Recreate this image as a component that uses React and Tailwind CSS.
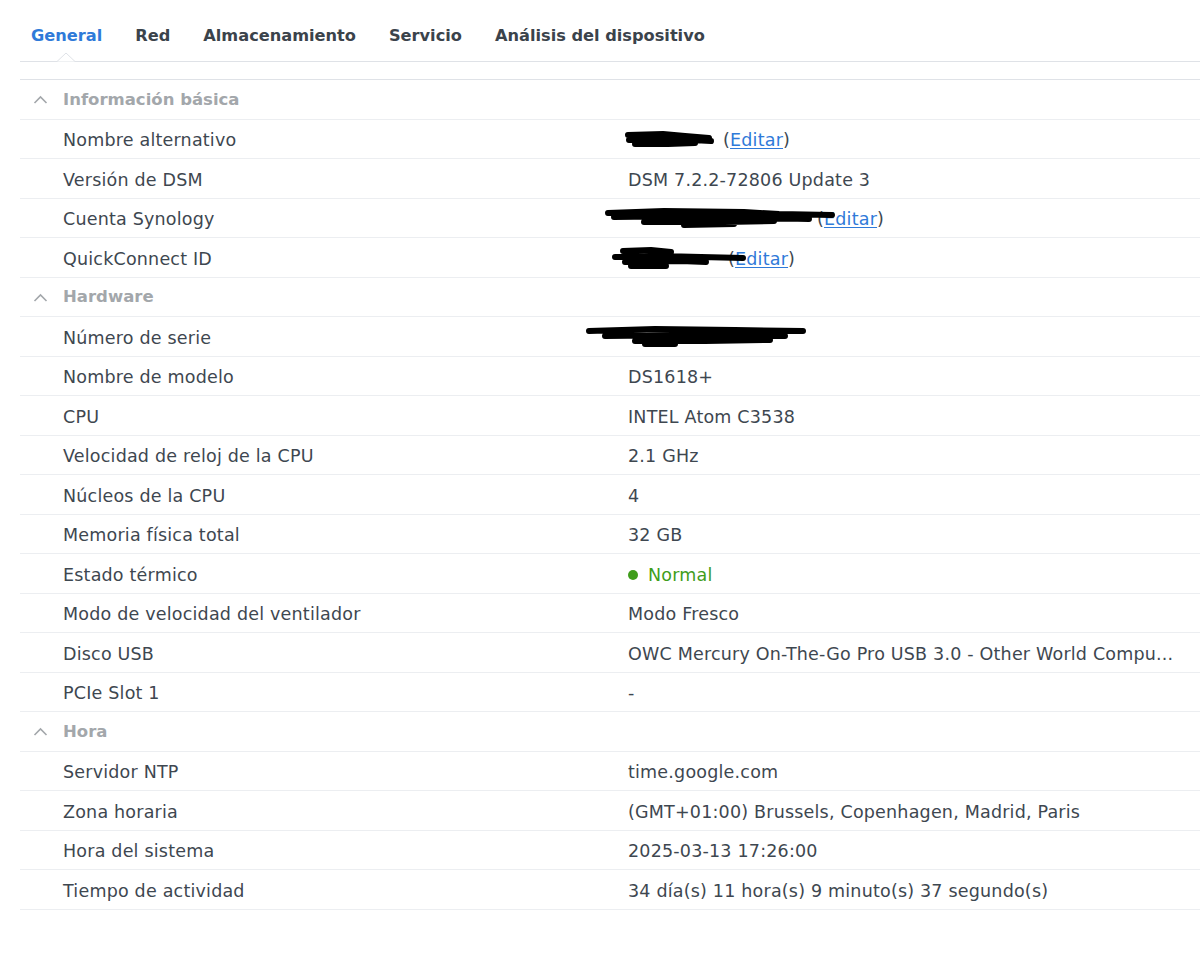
import React from "react";

const font = { fontFamily: '"DejaVu Sans", Verdana, sans-serif' };

function Chevron() {
  return (
    <svg width="15" height="10" viewBox="0 0 15 10" className="mr-[15px]">
      <path d="M1.5 8 L7.5 2 L13.5 8" fill="none" stroke="#a3a7ab" strokeWidth="1.6" />
    </svg>
  );
}

// black marker blobs over hidden values
function Scribble({ left, top, width, height, d }) {
  return (
    <svg
      className="absolute pointer-events-none"
      style={{ left, top }}
      width={width}
      height={height}
      viewBox={`0 0 ${width} ${height}`}
    >
      <path d={d} fill="none" stroke="#000" strokeWidth="6" strokeLinecap="round" strokeLinejoin="round" />
    </svg>
  );
}

function Editar() {
  return (
    <span>
      (<span className="text-[#2f7ad9] underline underline-offset-2">Editar</span>)
    </span>
  );
}

const sections = [
  {
    title: "Información básica",
    rows: [
      {
        label: "Nombre alternativo",
        value: (
          <span className="relative flex items-center">
            <span className="block w-[95px] h-[20px]" />
            <Editar />
            <Scribble left={-5} top={3} width={96} height={20} d="M5 5 L40 4 L62 6 L86 8 M6 10 L50 9 L88 11 M12 14 L45 14 L72 13" />
          </span>
        ),
      },
      { label: "Versión de DSM", value: "DSM 7.2.2-72806 Update 3" },
      {
        label: "Cuenta Synology",
        value: (
          <span className="relative flex items-center">
            <span className="block w-[189px] h-[20px]" />
            <Editar />
            <Scribble left={-24} top={2} width={232} height={22} d="M4 5 L60 3 L140 4 L175 6 L228 7 M10 9 L90 8 L160 10 L205 11 M40 14 L120 14 L170 13 M80 17 L130 16" />
          </span>
        ),
      },
      {
        label: "QuickConnect ID",
        value: (
          <span className="relative flex items-center">
            <span className="block w-[100px] h-[20px]" />
            <Editar />
            <Scribble left={-17} top={0} width={136} height={26} d="M12 5 L40 4 L60 6 M4 11 L50 10 L90 11 L132 12 M14 16 L70 15 L95 16 M20 20 L55 20" />
          </span>
        ),
      },
    ],
  },
  {
    title: "Hardware",
    rows: [
      {
        label: "Número de serie",
        value: (
          <span className="relative flex items-center">
            <span className="block w-[160px] h-[20px]" />
            <Scribble left={-43} top={-2} width={222} height={26} d="M4 5 L70 3 L150 4 L218 5 M20 10 L110 9 L200 10 M50 15 L120 15 L185 14 M60 18 L90 18" />
          </span>
        ),
      },
      { label: "Nombre de modelo", value: "DS1618+" },
      { label: "CPU", value: "INTEL Atom C3538" },
      { label: "Velocidad de reloj de la CPU", value: "2.1 GHz" },
      { label: "Núcleos de la CPU", value: "4" },
      { label: "Memoria física total", value: "32 GB" },
      {
        label: "Estado térmico",
        value: (
          <span className="flex items-center text-[#3f9d1b]">
            <span className="w-[10px] h-[10px] rounded-full bg-[#3f9d1b] mr-[10px]" />
            Normal
          </span>
        ),
      },
      { label: "Modo de velocidad del ventilador", value: "Modo Fresco" },
      { label: "Disco USB", value: "OWC Mercury On-The-Go Pro USB 3.0 - Other World Compu..." },
      { label: "PCIe Slot 1", value: "-" },
    ],
  },
  {
    title: "Hora",
    rows: [
      { label: "Servidor NTP", value: "time.google.com" },
      { label: "Zona horaria", value: "(GMT+01:00) Brussels, Copenhagen, Madrid, Paris" },
      { label: "Hora del sistema", value: "2025-03-13 17:26:00" },
      { label: "Tiempo de actividad", value: "34 día(s) 11 hora(s) 9 minuto(s) 37 segundo(s)" },
    ],
  },
];

const tabs = ["General", "Red", "Almacenamiento", "Servicio", "Análisis del dispositivo"];

export default function App() {
  return (
    <div className="w-[1200px] h-[959px] bg-white overflow-hidden" style={font}>
      <div className="pl-[20px]">
        <div className="relative flex items-center gap-[33px] pl-[11px] h-[62px] border-b border-[#dfe2e7]">
          {tabs.map((t, i) => (
            <span
              key={t}
              className={`pt-[12px] text-[16.2px] font-bold ${i === 0 ? "text-[#2f7ad9]" : "text-[#3b434b]"}`}
            >
              {t}
            </span>
          ))}
          <svg className="absolute left-[37px] bottom-[-1px]" width="18" height="10" viewBox="0 0 18 10">
            <path d="M0 9.5 L9 1 L18 9.5" fill="#fff" stroke="#dfe2e7" strokeWidth="1" />
          </svg>
        </div>
        <div className="h-[18px] border-b border-[#dfe2e7]" />
        {sections.map((s) => (
          <div key={s.title}>
            <div className="h-[39.5px] flex items-center pl-[13px] pt-[2px] border-b border-[#eceef1]">
              <Chevron />
              <span className="text-[16.5px] font-bold text-[#a3a7ab]">{s.title}</span>
            </div>
            {s.rows.map((r) => (
              <div
                key={r.label}
                className="h-[39.5px] grid grid-cols-[565px_1fr] items-center pl-[43px] pt-[3px] border-b border-[#eceef1] text-[17.5px] tracking-[0.2px] text-[#3e4750]"
              >
                <span>{r.label}</span>
                <span className="whitespace-nowrap">{r.value}</span>
              </div>
            ))}
          </div>
        ))}
      </div>
    </div>
  );
}
